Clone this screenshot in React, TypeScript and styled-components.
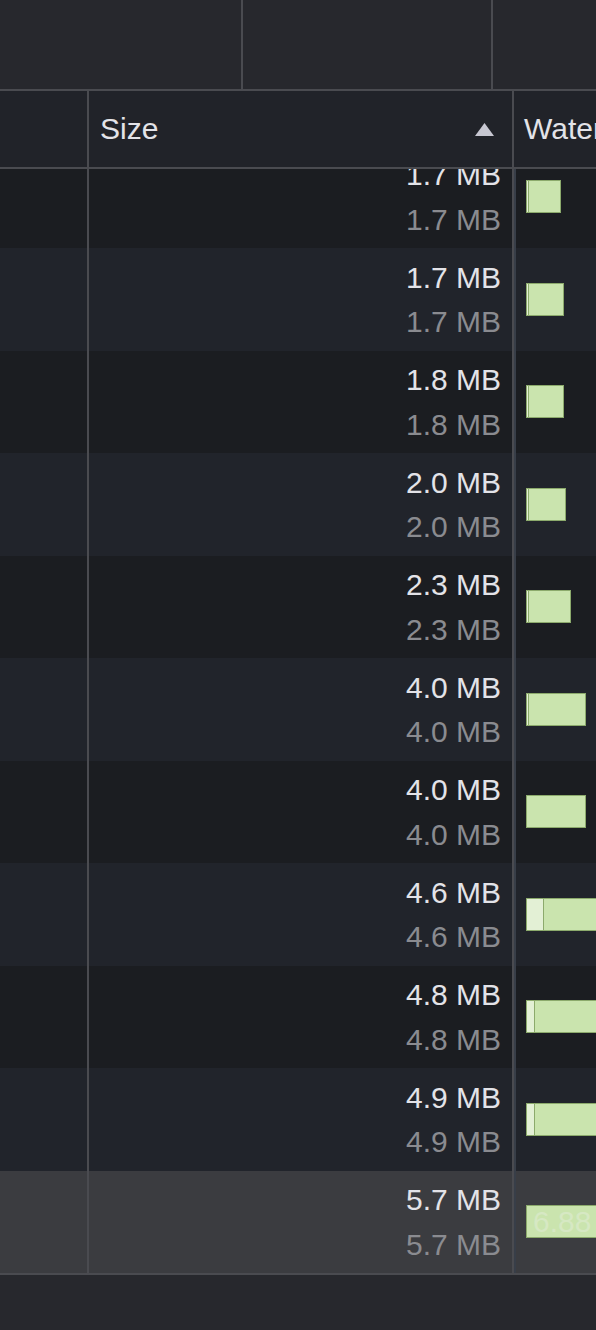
import React from 'react'
import styled, { createGlobalStyle } from 'styled-components'

const line = 'rgb(74,75,80)'

const GlobalStyle = createGlobalStyle`
  html, body {
    margin: 0;
    padding: 0;
    background: rgb(39,40,45);
    overflow: hidden;
  }
  body {
    font-family: "Liberation Sans", Arial, sans-serif;
  }
  * { box-sizing: border-box; }
`

const Page = styled.div`
  width: 596px;
  height: 1330px;
  display: flex;
  flex-direction: column;
  background: rgb(39,40,45);
  overflow: hidden;
`

const Toolbar = styled.div`
  display: grid;
  grid-template-columns: 243px 250px 1fr;
  height: 91px;
  flex: none;
  border-bottom: 2px solid ${line};
`

const ToolbarCell = styled.div`
  border-right: 2px solid ${line};
  &:last-child {
    border-right: none;
  }
`

const Columns = `
  display: grid;
  grid-template-columns: 89px 425px 1fr;
`

const HeaderRow = styled.div`
  ${Columns}
  height: 78px;
  flex: none;
  background: rgb(33,35,41);
  border-bottom: 2px solid ${line};
  color: rgb(227,227,232);
  font-size: 30px;
`

const HeaderCell = styled.div<{ $last?: boolean }>`
  display: flex;
  align-items: center;
  justify-content: space-between;
  padding: 0 18px 0 ${p => (p.$last ? 10 : 11)}px;
  border-right: ${p => (p.$last ? 'none' : `2px solid ${line}`)};
  white-space: nowrap;
  overflow: hidden;
`

const SortArrow = styled.svg`
  width: 19px;
  height: 13px;
  flex: none;
`

const Body = styled.div`
  height: 1106px;
  flex: none;
  overflow: hidden;
  border-bottom: 2px solid ${line};
`

const Scroller = styled.div`
  margin-top: -23.5px;
`

const Row = styled.div<{ $tone: 'dark' | 'light' | 'hover' }>`
  ${Columns}
  height: 102.5px;
  background: ${p =>
    p.$tone === 'hover' ? 'rgb(59,60,64)' : p.$tone === 'light' ? 'rgb(33,36,43)' : 'rgb(27,29,33)'};
`

const Cell = styled.div`
  border-right: 2px solid ${line};
`

const SizeCell = styled(Cell)`
  display: flex;
  flex-direction: column;
  justify-content: center;
  align-items: flex-end;
  padding: 1.7px 11px 0 0;
  font-size: 30px;
  line-height: 44.5px;
`

const Primary = styled.div`
  color: rgb(227,227,232);
`

const Secondary = styled.div`
  color: rgb(138,139,144);
`

const WaterfallCell = styled.div`
  display: flex;
  align-items: center;
  padding-left: 12px;
  overflow: hidden;
  box-shadow: inset 2px 0 0 rgb(56,62,72);
`

const Bar = styled.div`
  display: flex;
  height: 33px;
  flex: none;
  position: relative;
`

const Segment = styled.div<{ $light?: boolean }>`
  height: 100%;
  flex: none;
  background: ${p => (p.$light ? 'rgb(227,240,213)' : 'rgb(202,228,174)')};
  border: 1.5px solid rgb(140,170,108);
  & + & {
    border-left: none;
  }
`

const BarLabel = styled.span`
  position: absolute;
  left: 7px;
  top: 0;
  line-height: 33px;
  font-size: 30px;
  color: rgb(214,232,195);
  white-space: nowrap;
`

interface RowData {
  size: string
  wait: number
  total: number
  label?: string
}

const rows: RowData[] = [
  { size: '1.7 MB', wait: 3, total: 35 },
  { size: '1.7 MB', wait: 3, total: 38 },
  { size: '1.8 MB', wait: 3, total: 38 },
  { size: '2.0 MB', wait: 3, total: 40 },
  { size: '2.3 MB', wait: 3, total: 45 },
  { size: '4.0 MB', wait: 3, total: 60 },
  { size: '4.0 MB', wait: 0, total: 60 },
  { size: '4.6 MB', wait: 18, total: 200 },
  { size: '4.8 MB', wait: 9, total: 200 },
  { size: '4.9 MB', wait: 9, total: 200 },
  { size: '5.7 MB', wait: 0, total: 200, label: '6.88 s' },
]

const App = () => {
  return (
    <Page>
      <GlobalStyle />
      <Toolbar>
        <ToolbarCell />
        <ToolbarCell />
        <ToolbarCell />
      </Toolbar>
      <HeaderRow>
        <HeaderCell />
        <HeaderCell>
          <span>Size</span>
          <SortArrow viewBox="0 0 19 13">
            <polygon points="9.5,0 19,13 0,13" fill="rgb(199,199,209)" />
          </SortArrow>
        </HeaderCell>
        <HeaderCell $last>Waterfall</HeaderCell>
      </HeaderRow>
      <Body>
        <Scroller>
          {rows.map((row, index) => (
            <Row
              key={index}
              $tone={index === rows.length - 1 ? 'hover' : index % 2 ? 'light' : 'dark'}
            >
              <Cell />
              <SizeCell>
                <Primary>{row.size}</Primary>
                <Secondary>{row.size}</Secondary>
              </SizeCell>
              <WaterfallCell>
                <Bar>
                  {row.wait > 0 && <Segment $light style={{ width: row.wait }} />}
                  <Segment style={{ width: row.total - row.wait }} />
                  {row.label && <BarLabel>{row.label}</BarLabel>}
                </Bar>
              </WaterfallCell>
            </Row>
          ))}
        </Scroller>
      </Body>
    </Page>
  )
}

export default App
